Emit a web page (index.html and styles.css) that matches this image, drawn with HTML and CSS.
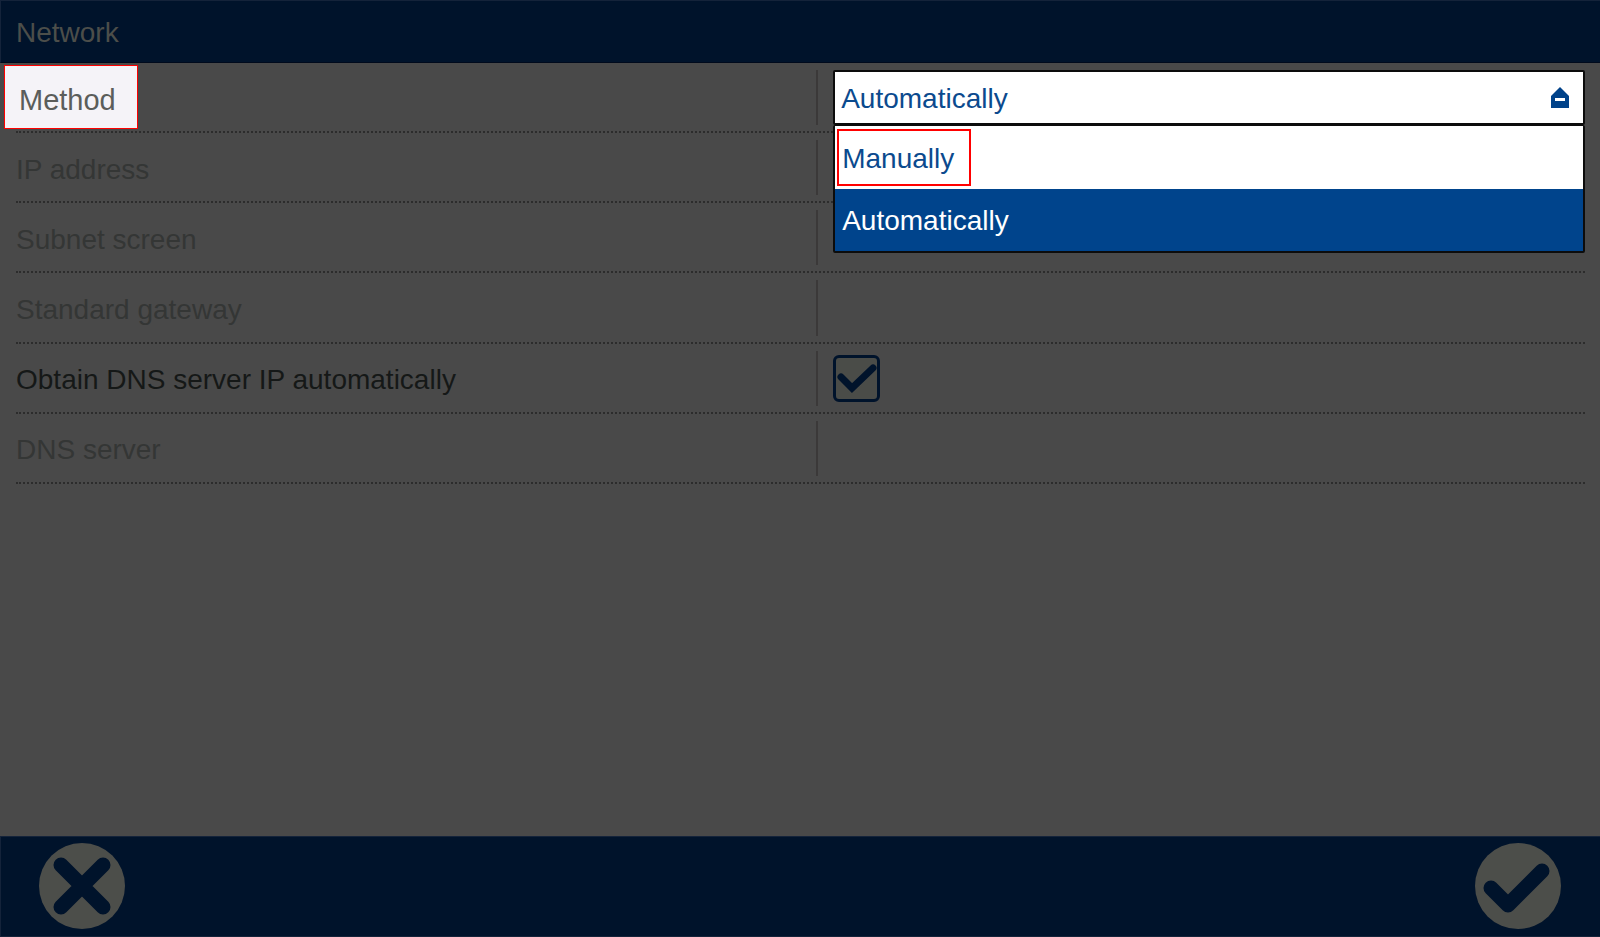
FILE: index.html
```html
<!doctype html>
<html lang="en">
<head>
    <meta charset="UTF-8">
    <meta name="viewport" content="width=device-width, initial-scale=1">
    <title>Network</title>
    <link rel="stylesheet" href="styles.css">
</head>
<body>
<header class="bar header">
    <h1>Network</h1>
</header>

<main>
    <form id="networkForm" class="settings">
        <div class="row">
            <div class="name"><label for="method" class="callout">Method</label></div>
            <div class="value">
                <div class="dropdown">
                    <select id="method" name="method">
                        <option value="manual">Manually</option>
                        <option value="auto" selected>Automatically</option>
                    </select>
                    <svg class="arrow" viewBox="0 0 20 21" aria-hidden="true">
                        <path d="M10 0L19 9V21H1V9Z" fill="#004289"/>
                        <path d="M5 11H15V14H5Z" fill="#fff"/>
                    </svg>
                    <div class="menu">
                        <button type="button" class="option"><span class="mark">Manually</span></button>
                        <button type="button" class="option selected">Automatically</button>
                    </div>
                </div>
            </div>
        </div>
        <div class="row disabled">
            <div class="name">IP address</div>
            <div class="value"></div>
        </div>
        <div class="row disabled">
            <div class="name">Subnet screen</div>
            <div class="value"></div>
        </div>
        <div class="row disabled">
            <div class="name">Standard gateway</div>
            <div class="value"></div>
        </div>
        <div class="row">
            <div class="name"><label for="autoDns">Obtain DNS server IP automatically</label></div>
            <div class="value">
                <span class="check">
                    <input type="checkbox" id="autoDns" name="autoDns" checked>
                    <svg viewBox="0 0 47 47" aria-hidden="true">
                        <path d="M8 22L19 33L40 13" fill="none" stroke="#00132b" stroke-width="7" stroke-linecap="round"/>
                    </svg>
                </span>
            </div>
        </div>
        <div class="row disabled">
            <div class="name">DNS server</div>
            <div class="value"></div>
        </div>
    </form>
</main>

<footer class="bar footer">
    <button type="button" class="round" aria-label="Cancel">
        <svg viewBox="0 0 86 86" aria-hidden="true">
            <path d="M22 22L64 64M64 22L22 64" fill="none" stroke="#00132b" stroke-width="15" stroke-linecap="round"/>
        </svg>
    </button>
    <button type="submit" form="networkForm" class="round" aria-label="Confirm">
        <svg viewBox="0 0 86 86" aria-hidden="true">
            <path d="M16 45L33 62L67 28" fill="none" stroke="#00132b" stroke-width="15" stroke-linecap="round" stroke-linejoin="round"/>
        </svg>
    </button>
</footer>
</body>
</html>
```
FILE: styles.css
```css
* {
    box-sizing: border-box;
}
body {
    margin: 0;
    min-height: 100vh;
    display: flex;
    flex-direction: column;
    background: #494949;
    color: #151817;
    font-family: "Liberation Sans", Arial, sans-serif;
    font-size: 28px;
    line-height: 32px;
}
main {
    flex: 1;
    padding: 0 15px 0 16px;
}
.bar {
    display: flex;
    align-items: center;
    background: #00132b;
    border: 1px solid #14233a;
    border-right: none;
}
.header {
    padding: 16px 15px 13px;
    border-bottom: 1px solid #000a1c;
}
h1 {
    margin: 0;
    font-size: 28px;
    font-weight: normal;
    color: #4c4e4a;
}
.settings {
    display: grid;
    grid-auto-rows: 1fr;
    min-height: 421px;
}
.row {
    display: grid;
    grid-template-columns: 51% 1fr;
    border-bottom: 2px dotted #2c2c2c;
}
.name {
    display: flex;
    align-items: center;
    padding-top: 5px;
}
.value {
    display: flex;
    align-items: center;
    margin: 7px 0 6px;
    padding-left: 15px;
    border-left: 2px solid #3b3939;
}
.disabled {
    color: #343635;
}

/* Highlighted label */
.callout {
    margin: -5px 0 0 -12px;
    padding: 18px 21px 12px 14px;
    border: 1px solid #f00;
    background: #f5f3f8;
    color: #5b5d5b;
    font-size: 29px;
}

/* Open dropdown */
.dropdown {
    position: relative;
    flex: 1;
}
select {
    display: block;
    width: 100%;
    height: 55px;
    padding: 2px 6px 0;
    appearance: none;
    background: #fff;
    border: 2px solid #0c0c0c;
    border-radius: 2px;
    color: #0b4a8e;
    font: inherit;
}
.arrow {
    position: absolute;
    top: 17px;
    right: 15px;
    width: 20px;
    height: 21px;
    pointer-events: none;
}
.menu {
    position: absolute;
    top: 100%;
    left: 0;
    right: 0;
    border: 2px solid #0c0c0c;
    border-top-width: 1px;
    border-radius: 2px;
}
.option {
    display: block;
    width: 100%;
    padding: 3px 2px;
    border: none;
    background: #fff;
    color: #0b4a8e;
    font: inherit;
    line-height: 32px;
    text-align: left;
}
.option.selected {
    padding: 16px 7px 14px;
    background: #00448c;
    color: #fff;
}
.mark {
    display: inline-block;
    padding: 12px 15px 9px 3px;
    border: 2px solid #f00;
}

.check {
    position: relative;
    display: flex;
}
.check input {
    width: 47px;
    height: 47px;
    margin: 0;
    appearance: none;
    background: #4a4c48;
    border: 3px solid #00132b;
    border-radius: 6px;
}
.check svg {
    position: absolute;
    inset: 0;
    pointer-events: none;
}

.footer {
    justify-content: space-between;
    padding: 6px 39px 7px 38px;
}
.round {
    width: 86px;
    height: 86px;
    padding: 0;
    border: none;
    border-radius: 50%;
    background: #4c4e4a;
}
.round svg {
    display: block;
}
```
